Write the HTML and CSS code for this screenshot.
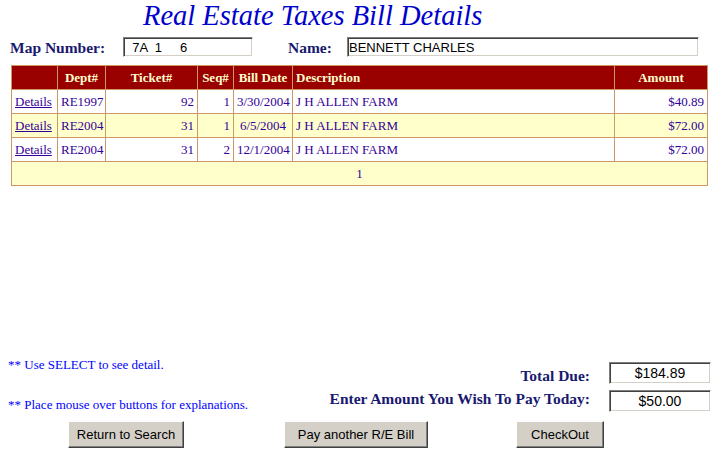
FILE: index.html
```html
<!DOCTYPE html>
<html lang="en">
<head>
  <meta charset="UTF-8" />
  <title>Real Estate Taxes Bill Details</title>
  <link rel="stylesheet" href="styles.css">
</head>
<body>
  <h1 class="page-title">Real Estate Taxes Bill Details</h1>

  <div class="lookup">
    <span class="field-label map-label">Map Number:</span>
    <input type="text" class="text-box map-box" value="  7A  1     6" readonly />
    <span class="field-label name-label">Name:</span>
    <input type="text" class="text-box name-box" value="BENNETT CHARLES" readonly />
  </div>

  <table class="bills">
    <colgroup>
      <col style="width:46px"><col style="width:48px"><col style="width:92px">
      <col style="width:36px"><col style="width:59px"><col style="width:322px"><col style="width:93px">
    </colgroup>
    <thead>
      <tr>
        <th></th>
        <th>Dept#</th>
        <th>Ticket#</th>
        <th>Seq#</th>
        <th>Bill Date</th>
        <th class="left">Description</th>
        <th>Amount</th>
      </tr>
    </thead>
    <tbody>
      <tr>
        <td><a href="#">Details</a></td>
        <td>RE1997</td>
        <td class="num">92</td>
        <td class="num">1</td>
        <td class="center">3/30/2004</td>
        <td>J H ALLEN FARM</td>
        <td class="num">$40.89</td>
      </tr>
      <tr class="alt">
        <td><a href="#">Details</a></td>
        <td>RE2004</td>
        <td class="num">31</td>
        <td class="num">1</td>
        <td class="center">6/5/2004</td>
        <td>J H ALLEN FARM</td>
        <td class="num">$72.00</td>
      </tr>
      <tr>
        <td><a href="#">Details</a></td>
        <td>RE2004</td>
        <td class="num">31</td>
        <td class="num">2</td>
        <td class="center">12/1/2004</td>
        <td>J H ALLEN FARM</td>
        <td class="num">$72.00</td>
      </tr>
    </tbody>
    <tfoot>
      <tr class="alt">
        <td colspan="7" class="center">1</td>
      </tr>
    </tfoot>
  </table>

  <div class="summary">
    <div class="notes">
      <p>** Use SELECT to see detail.</p>
      <p>** Place mouse over buttons for explanations.</p>
    </div>
    <div class="totals">
      <span class="field-label due-label">Total Due:</span>
      <input type="text" class="text-box amount-box" value="$184.89" readonly />
      <span class="field-label pay-label">Enter Amount You Wish To Pay Today:</span>
      <input type="text" class="text-box amount-box" value="$50.00" />
    </div>
  </div>

  <div class="actions">
    <button class="btn btn-return">Return to Search</button>
    <button class="btn btn-another">Pay another R/E Bill</button>
    <button class="btn btn-checkout">CheckOut</button>
  </div>
</body>
</html>
```

FILE: styles.css
```css
body {
  margin: 0;
  background: #ffffff;
  font-family: "Liberation Serif", "Times New Roman", serif;
}
.page-title {
  margin: 0;
  padding-left: 143px;
  font-size: 28.5px;
  line-height: 31px;
  font-weight: normal;
  font-style: italic;
  color: #0000cc;
}

/* map number / name line */
.lookup {
  display: flex;
  align-items: center;
  padding: 6px 0 0 10px;
  height: 20px;
}
.field-label {
  font-size: 15.5px;
  line-height: 17px;
  font-weight: bold;
  color: #191970;
  white-space: nowrap;
}
.map-label {
  width: 113px;
}
.text-box {
  box-sizing: border-box;
  height: 20px;
  margin: 0;
  padding: 0 1px;
  font-family: "Liberation Sans", Arial, sans-serif;
  font-size: 13px;
  color: #000000;
  background: #ffffff;
  border: 1px solid;
  border-color: #808080 #ffffff #ffffff #808080;
  box-shadow: inset 1px 1px 0 #404040, inset -1px -1px 0 #d4d0c8;
  outline: none;
  white-space: pre;
}
.map-box {
  width: 130px;
}
.name-label {
  width: 59px;
  margin-left: 35px;
}
.name-box {
  width: 352px;
}

/* bills grid */
.bills {
  margin: 8px 0 0 11px;
  width: 697px;
  table-layout: fixed;
  border-collapse: collapse;
  font-size: 13px;
  color: #330099;
}
.bills th,
.bills td {
  border: 1px solid #cc9966;
  padding: 0 3px;
  height: 23px;
  white-space: nowrap;
  text-align: left;
}
.bills th {
  background: #990000;
  color: #ffffcc;
  font-weight: bold;
  text-align: center;
}
.bills th.left {
  text-align: left;
}
.bills .num {
  text-align: right;
}
.bills .center {
  text-align: center;
}
.bills .alt td {
  background: #ffffcc;
}
.bills a {
  color: #330099;
}

/* notes and totals */
.summary {
  display: flex;
  justify-content: space-between;
  margin-top: 169px;
  padding: 0 9px 0 8px;
}
.notes {
  padding-top: 2px;
  font-size: 13px;
  line-height: 16px;
  color: #0000ff;
}
.notes p {
  margin: 0 0 24px;
}
.notes p:last-child {
  margin-bottom: 0;
}
.totals {
  display: grid;
  grid-template-columns: auto 102px;
  grid-auto-rows: 22px;
  column-gap: 19px;
  row-gap: 6px;
  padding-top: 7px;
  justify-items: end;
}
.due-label {
  align-self: end;
}
.pay-label {
  align-self: start;
}
.amount-box {
  width: 102px;
  height: 22px;
  text-align: center;
  font-size: 14px;
}

/* buttons */
.actions {
  display: grid;
  grid-template-columns: 236px 224px 184px;
  justify-items: center;
  margin-top: 8px;
  padding-left: 8px;
}
.btn {
  box-sizing: border-box;
  height: 27px;
  padding: 0;
  font-family: "Liberation Sans", Arial, sans-serif;
  font-size: 13px;
  color: #000000;
  background: #d4d0c8;
  border: 1px solid;
  border-color: #ffffff #404040 #404040 #ffffff;
  box-shadow: inset -1px -1px 0 #808080;
  cursor: pointer;
}
.btn-return {
  width: 116px;
}
.btn-another {
  width: 144px;
}
.btn-checkout {
  width: 88px;
}
```
